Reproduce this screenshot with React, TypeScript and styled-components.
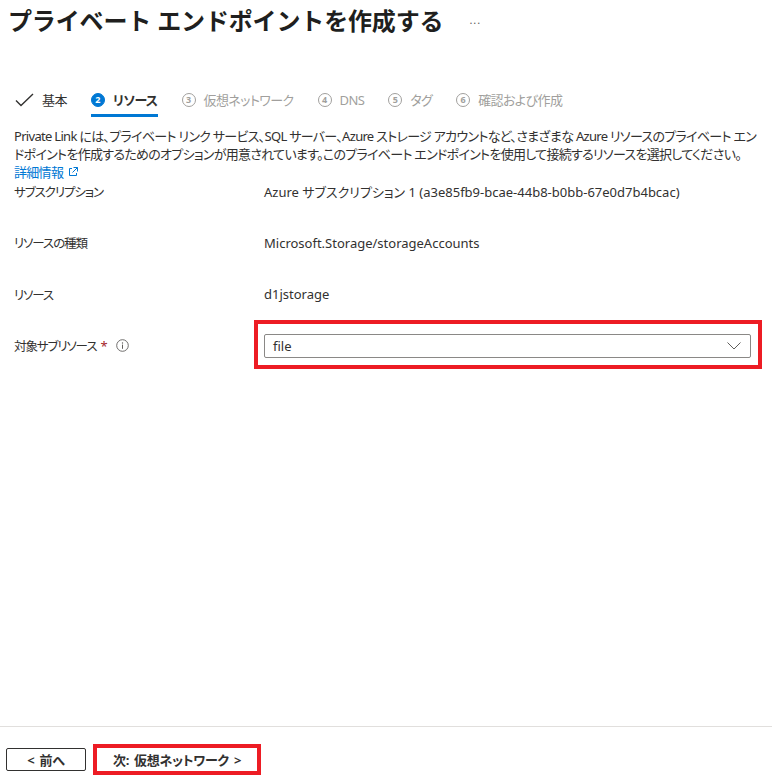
import React from "react";
import styled, { createGlobalStyle } from "styled-components";

const GlobalStyle = createGlobalStyle`
  html, body {
    margin: 0;
    padding: 0;
    background: #ffffff;
  }
  body {
    font-family: "Noto Sans", "Noto Sans CJK JP", sans-serif;
    font-feature-settings: "palt";
    color: #323130;
  }
  * {
    box-sizing: border-box;
  }
`;

const Page = styled.div`
  display: flex;
  flex-direction: column;
  min-height: 100vh;
`;

const Main = styled.main`
  flex: 1;
  padding: 3px 10px 0 14px;
`;

const Header = styled.header`
  display: flex;
  align-items: center;
  gap: 26px;
  margin-left: -6px;
`;

const Title = styled.h1`
  margin: 0;
  font-size: 24px;
  line-height: 36px;
  font-weight: 700;
  font-feature-settings: normal;
  letter-spacing: -0.15px;
  color: #201f1e;
`;

const More = styled.span`
  font-size: 11px;
  letter-spacing: 1px;
  color: #605e5c;
  margin-top: -4px;
`;

const Steps = styled.nav`
  display: flex;
  align-items: stretch;
  gap: 24px;
  margin-top: 45px;
`;

const Step = styled.div<{ $state: "done" | "active" | "todo" }>`
  display: flex;
  align-items: center;
  gap: 8px;
  height: 33px;
  padding-top: 1px;
  font-size: 13px;
  letter-spacing: -0.6px;
  font-weight: ${(p) => (p.$state === "active" ? 700 : 400)};
  color: ${(p) => (p.$state === "todo" ? "#a19f9d" : "#323130")};
  border-bottom: 3px solid ${(p) => (p.$state === "active" ? "#0078d4" : "transparent")};
  margin-left: ${(p) => (p.$state === "done" ? "1px" : "0")};
`;

const Badge = styled.span<{ $active?: boolean }>`
  display: inline-flex;
  align-items: center;
  justify-content: center;
  width: 14px;
  height: 14px;
  border-radius: 50%;
  font-size: 9px;
  font-weight: 700;
  letter-spacing: 0;
  line-height: 1;
  color: ${(p) => (p.$active ? "#ffffff" : "#a19f9d")};
  background: ${(p) => (p.$active ? "#0078d4" : "transparent")};
  border: 1px solid ${(p) => (p.$active ? "#0078d4" : "#a19f9d")};
`;

const Intro = styled.p`
  margin: 10px 0 0;
  font-size: 13px;
  line-height: 18px;
  letter-spacing: -0.7px;
`;

const MoreLink = styled.a`
  display: inline-flex;
  align-items: center;
  gap: 5px;
  color: #0078d4;
  text-decoration: none;
`;

const Fields = styled.div`
  display: flex;
  flex-direction: column;
  gap: 27.5px;
  margin-top: -2px;
`;

const Field = styled.div`
  display: grid;
  grid-template-columns: 250px 1fr;
  align-items: center;
  min-height: 24px;
  padding-right: 11px;
`;

const Label = styled.div`
  display: flex;
  align-items: center;
  gap: 9px;
  font-size: 12.5px;
  letter-spacing: -1.1px;
`;

const Required = styled.span`
  color: #a4262c;
  margin-left: -5px;
  font-size: 13px;
`;

const Value = styled.div`
  font-size: 13px;
  letter-spacing: 0;
`;

const Highlight = styled.div`
  position: relative;
  &::after {
    content: "";
    position: absolute;
    inset: -14px -11px -11px -10px;
    border: 4px solid #ed1c24;
    pointer-events: none;
  }
`;

const Select = styled.div`
  display: flex;
  align-items: center;
  justify-content: space-between;
  height: 24px;
  padding: 0 9px 0 8px;
  border: 1px solid #8a8886;
  border-radius: 2px;
  font-size: 13px;
  background: #ffffff;
`;

const Footer = styled.footer`
  display: flex;
  align-items: center;
  gap: 11px;
  border-top: 1px solid #e1dfdd;
  padding: 21px 6px 12px;
`;

const Button = styled.button<{ $outlined?: boolean }>`
  height: 23px;
  padding: 0;
  width: ${(p) => (p.$outlined ? "80px" : "160px")};
  font-family: inherit;
  font-feature-settings: "palt";
  font-size: 13px;
  letter-spacing: -0.3px;
  word-spacing: 2px;
  font-weight: 700;
  color: #323130;
  background: #ffffff;
  border: 1px solid ${(p) => (p.$outlined ? "#323130" : "transparent")};
  border-radius: 2px;
  cursor: pointer;
`;

const NextWrap = styled.div`
  position: relative;
  display: flex;
  &::after {
    content: "";
    position: absolute;
    inset: -4px -4px -4px -4px;
    border: 4px solid #ed1c24;
    pointer-events: none;
  }
`;

const Check = () => (
  <svg width="19" height="14" viewBox="0 0 19 14" fill="none">
    <path d="M1 7.5 L6 12.5 L18 1" stroke="#323130" strokeWidth="1.4" />
  </svg>
);

const ExternalIcon = () => (
  <svg width="10" height="10" viewBox="0 0 10 10" fill="none">
    <path d="M4 1.5 H1.5 V8.5 H8.5 V6" stroke="#0078d4" strokeWidth="1" />
    <path d="M5.5 0.5 H9.5 V4.5 M9.5 0.5 L4.5 5.5" stroke="#0078d4" strokeWidth="1" />
  </svg>
);

const InfoIcon = () => (
  <svg width="13" height="13" viewBox="0 0 13 13" fill="none">
    <circle cx="6.5" cy="6.5" r="5.8" stroke="#605e5c" strokeWidth="0.9" />
    <circle cx="6.5" cy="4" r="0.7" fill="#605e5c" />
    <path d="M6.5 5.6 V9.8" stroke="#605e5c" strokeWidth="1" />
  </svg>
);

const Chevron = () => (
  <svg width="14" height="8" viewBox="0 0 14 8" fill="none">
    <path d="M0.5 0.5 L7 7 L13.5 0.5" stroke="#605e5c" strokeWidth="1" />
  </svg>
);

const steps: { n: number; label: string; state: "done" | "active" | "todo" }[] = [
  { n: 2, label: "リソース", state: "active" },
  { n: 3, label: "仮想ネットワーク", state: "todo" },
  { n: 4, label: "DNS", state: "todo" },
  { n: 5, label: "タグ", state: "todo" },
  { n: 6, label: "確認および作成", state: "todo" },
];

const rows = [
  { label: "サブスクリプション", value: "Azure サブスクリプション 1 (a3e85fb9-bcae-44b8-b0bb-67e0d7b4bcac)" },
  { label: "リソースの種類", value: "Microsoft.Storage/storageAccounts" },
  { label: "リソース", value: "d1jstorage" },
];

export default function App() {
  return (
    <>
      <GlobalStyle />
      <Page>
        <Main>
          <Header>
            <Title>プライベート エンドポイントを作成する</Title>
            <More>...</More>
          </Header>

          <Steps>
            <Step $state="done">
              <Check />
              <span>基本</span>
            </Step>
            {steps.map((s) => (
              <Step key={s.n} $state={s.state}>
                <Badge $active={s.state === "active"}>{s.n}</Badge>
                <span>{s.label}</span>
              </Step>
            ))}
          </Steps>

          <Intro>
            Private Link には、プライベート リンク サービス、SQL サーバー、Azure ストレージ アカウントなど、さまざまな Azure リソースのプライベート エン
            <br />
            ドポイントを作成するためのオプションが用意されています。このプライベート エンドポイントを使用して接続するリソースを選択してください。
            <br />
            <MoreLink href="#">
              詳細情報
              <ExternalIcon />
            </MoreLink>
          </Intro>

          <Fields>
            {rows.map((r) => (
              <Field key={r.label}>
                <Label>{r.label}</Label>
                <Value>{r.value}</Value>
              </Field>
            ))}
            <Field>
              <Label>
                対象サブリソース <Required>*</Required>
                <InfoIcon />
              </Label>
              <Highlight>
                <Select>
                  <span>file</span>
                  <Chevron />
                </Select>
              </Highlight>
            </Field>
          </Fields>
        </Main>

        <Footer>
          <Button $outlined>&lt; 前へ</Button>
          <NextWrap>
            <Button>次: 仮想ネットワーク &gt;</Button>
          </NextWrap>
        </Footer>
      </Page>
    </>
  );
}
